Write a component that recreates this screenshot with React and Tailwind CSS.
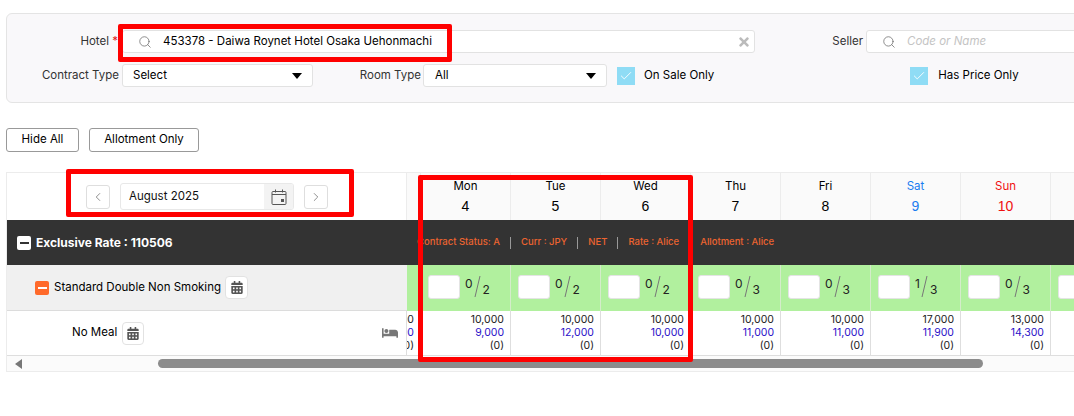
import React from 'react';
import { Search, ChevronLeft, ChevronRight, Check } from 'lucide-react';
import { FaBed, FaCalendarAlt, FaTimes } from 'react-icons/fa';

const days = [
  { name: 'Sun', num: 3, sold: 0, total: 2, rates: ['10,000', '10,000'] },
  { name: 'Mon', num: 4, sold: 0, total: 2, rates: ['10,000', '9,000'] },
  { name: 'Tue', num: 5, sold: 0, total: 2, rates: ['10,000', '12,000'] },
  { name: 'Wed', num: 6, sold: 0, total: 2, rates: ['10,000', '10,000'] },
  { name: 'Thu', num: 7, sold: 0, total: 3, rates: ['10,000', '11,000'] },
  { name: 'Fri', num: 8, sold: 0, total: 3, rates: ['10,000', '11,000'] },
  { name: 'Sat', num: 9, sold: 1, total: 3, rates: ['17,000', '11,900'], color: 'text-[#1a7df0]' },
  { name: 'Sun', num: 10, sold: 0, total: 3, rates: ['13,000', '14,300'], color: 'text-[#f01010]' },
  { name: 'Mon', num: 11, sold: 0, total: 3, rates: ['13,000', '14,300'] },
];

function Caret() {
  return <span className="w-0 h-0 border-l-[5px] border-r-[5px] border-t-[6px] border-l-transparent border-r-transparent border-t-black" />;
}

function CheckBox() {
  return (
    <span className="w-[18px] h-[18px] bg-[#8fdcf5] flex items-center justify-center shrink-0">
      <Check className="w-[14px] h-[14px] text-white" strokeWidth={1.5} />
    </span>
  );
}

function CalButton({ className }) {
  return (
    <span className={`h-[23px] bg-white border border-[#e2e2e2] rounded-[4px] flex items-center justify-center text-[#555] shrink-0 ${className}`}>
      <FaCalendarAlt className="w-[12px] h-[13px]" />
    </span>
  );
}

function MinusBox({ className, bar }) {
  return (
    <span className={`w-[14px] h-[14px] rounded-[2px] flex items-center justify-center shrink-0 ${className}`}>
      <span className={`w-[9px] h-[2px] ${bar}`} />
    </span>
  );
}

function Fraction({ sold, total }) {
  return (
    <div className="flex ml-[5px] h-[24px] text-[12px] leading-none text-[#222]">
      <span className="mt-[3px]">{sold}</span>
      <svg width="10" height="24" viewBox="0 0 10 24">
        <line x1="7" y1="1" x2="2" y2="22" stroke="#777" strokeWidth="1" />
      </svg>
      <span className="mt-[9px]">{total}</span>
    </div>
  );
}

export default function App() {
  return (
    <div className="relative w-[1074px] h-[416px] overflow-hidden bg-white font-['Inter',sans-serif] text-[11.5px] text-[#222]">
      {/* Search filters */}
      <div className="pt-[13px] pl-[6px]">
        <div className="w-[1200px] h-[90px] bg-[#f9f8fa] border border-[#e4e4e4] rounded-[6px] pt-[16px]">
          <div className="flex items-center h-[23px]">
            <div className="w-[112px] text-right pr-px text-[#333]">
              Hotel <span className="text-[#e02020]">*</span>
            </div>
            <div className="ml-[3px] w-[633px] h-[23px] bg-white border border-[#e2e2e2] rounded-[3px] flex items-center">
              <Search className="ml-[15px] w-[14px] h-[14px] text-[#666]" strokeWidth={1.25} />
              <span className="ml-[11px] text-black">453378 - Daiwa Roynet Hotel Osaka Uehonmachi</span>
              <FaTimes className="ml-auto mr-[3px] w-[14px] h-[14px] text-[#bbb]" />
            </div>
            <div className="w-[111px] text-right pr-[3px] text-[#333]">Seller</div>
            <div className="w-[300px] h-[23px] bg-white border border-[#e2e2e2] rounded-[3px] flex items-center">
              <Search className="ml-[15px] w-[14px] h-[14px] text-[#666]" strokeWidth={1.25} />
              <span className="ml-[11px] italic text-[#c4c4c4]">Code or Name</span>
            </div>
          </div>
          <div className="flex items-center h-[23px] mt-[11px]">
            <div className="w-[112px] text-right text-[#333]">Contract Type</div>
            <div className="ml-[3px] w-[191px] h-[23px] bg-white border border-[#e2e2e2] rounded-[3px] flex items-center justify-between pl-[10px] pr-[10px] text-black">
              Select <Caret />
            </div>
            <div className="w-[110px] text-right pr-[2px] text-[#333]">Room Type</div>
            <div className="w-[184px] h-[23px] bg-white border border-[#e2e2e2] rounded-[3px] flex items-center justify-between pl-[11px] pr-[10px] text-black">
              All <Caret />
            </div>
            <div className="ml-[10px] mt-px"><CheckBox /></div>
            <span className="ml-[9px] mt-px text-black">On Sale Only</span>
            <div className="ml-[196px] mt-px"><CheckBox /></div>
            <span className="ml-[10px] mt-px text-black">Has Price Only</span>
          </div>
        </div>
      </div>

      <div className="flex gap-[10px] pl-[6px] mt-[25px]">
        <button className="w-[73px] h-[24px] bg-white border border-[#999] rounded-[3px] text-black">Hide All</button>
        <button className="w-[110px] h-[24px] bg-white border border-[#999] rounded-[3px] text-black">Allotment Only</button>
      </div>

      {/* Rate table */}
      <div className="ml-[6px] mt-[20px] border-t border-l border-[#ececec]">
        {/* Date header */}
        <div className="flex h-[47px]">
          <div className="w-[400px] shrink-0 bg-white border-r border-[#ececec] flex items-center pl-[79px]">
            <button className="w-[24px] h-[24px] border border-[#dedede] rounded-[3px] flex items-center justify-center text-[#666]">
              <ChevronLeft className="w-[14px] h-[14px]" strokeWidth={1.25} />
            </button>
            <div className="ml-[10px] w-[174px] h-[27px] border border-[#e8e8e8] rounded-[3px] flex items-center overflow-hidden">
              <span className="ml-[8px] leading-none text-[#111]">August 2025</span>
              <span className="ml-auto w-[29px] h-full bg-[#f3f3f3] flex items-center justify-center">
                <svg width="16" height="16" viewBox="0 0 16 16" fill="none" stroke="#555" strokeWidth="1">
                  <rect x="1" y="2.5" width="14" height="13" rx="1" />
                  <line x1="1" y1="5.5" x2="15" y2="5.5" />
                  <line x1="4.5" y1="0.5" x2="4.5" y2="3.5" />
                  <line x1="11.5" y1="0.5" x2="11.5" y2="3.5" />
                  <rect x="10" y="10" width="3" height="3" fill="#555" stroke="none" />
                </svg>
              </span>
            </div>
            <button className="ml-[10px] w-[24px] h-[24px] border border-[#dedede] rounded-[3px] flex items-center justify-center text-[#666]">
              <ChevronRight className="w-[14px] h-[14px]" strokeWidth={1.25} />
            </button>
          </div>
          <div className="flex-1 overflow-hidden">
            <div className="flex -ml-[76px] h-full">
              {days.map((d, i) => (
                <div key={i} className={`w-[90px] shrink-0 bg-[#fafafa] border-r border-[#ececec] text-center pt-[6px] ${d.color || 'text-black'}`}>
                  <div className="leading-[14px]">{d.name}</div>
                  <div className="mt-[5px] text-[14px] leading-[16px] font-['Liberation_Sans',sans-serif]">{d.num}</div>
                </div>
              ))}
            </div>
          </div>
        </div>

        {/* Contract row */}
        <div className="flex items-center h-[45px] bg-[#333]">
          <div className="w-[400px] shrink-0 flex items-center pl-[10px]">
            <MinusBox className="bg-white" bar="bg-[#333]" />
            <span className="ml-[5px] text-[12px] font-bold text-white">Exclusive Rate : 110506</span>
          </div>
          <div className="flex items-center ml-[10px] text-[9.5px] font-medium text-[#ec6430] whitespace-nowrap">
            <span>Contract Status: A</span>
            <span className="mx-[10px] w-px h-[12px] bg-[#999]" />
            <span>Curr : JPY</span>
            <span className="mx-[10px] w-px h-[12px] bg-[#999]" />
            <span>NET</span>
            <span className="mx-[10px] w-px h-[12px] bg-[#999]" />
            <span>Rate : Alice</span>
            <span className="ml-[21px]">Allotment : Alice</span>
          </div>
        </div>

        {/* Room row */}
        <div className="flex h-[46px]">
          <div className="w-[400px] shrink-0 bg-[#f0f0f0] border-b border-[#dcdcdc] flex items-center pl-[28px]">
            <MinusBox className="bg-[#ff6a2b]" bar="bg-white" />
            <span className="ml-[5px] text-black">Standard Double Non Smoking</span>
            <CalButton className="ml-[4px] w-[23px]" />
          </div>
          <div className="flex-1 overflow-hidden">
            <div className="flex -ml-[76px] h-full">
              {days.map((d, i) => (
                <div key={i} className="w-[90px] shrink-0 bg-[#b1f09e] border-r border-[#d4ecca] flex items-start pt-[10px] pl-[7px]">
                  <input readOnly className="w-[32px] h-[24px] bg-white border border-[#e4e4e4] rounded-[3px]" />
                  <Fraction sold={d.sold} total={d.total} />
                </div>
              ))}
            </div>
          </div>
        </div>

        {/* Meal row */}
        <div className="flex h-[45px] border-b border-[#dedede]">
          <div className="w-[400px] shrink-0 bg-white border-r border-[#dedede] flex items-center pl-[65px]">
            <span className="text-black">No Meal</span>
            <CalButton className="ml-[5px] w-[22px]" />
            <FaBed className="ml-auto mr-[8px] w-[16px] h-[16px] text-[#777]" />
          </div>
          <div className="flex-1 overflow-hidden">
            <div className="flex -ml-[76px] h-full">
              {days.map((d, i) => (
                <div key={i} className="w-[90px] shrink-0 border-r border-[#dedede] text-right pr-[6px] pt-[2px] text-[10.5px] leading-[13px]">
                  <div className="text-[#222]">{d.rates[0]}</div>
                  <div className="text-[#2a10c8]">{d.rates[1]}</div>
                  <div className="text-[#222]">(0)</div>
                </div>
              ))}
            </div>
          </div>
        </div>

        {/* Scrollbar */}
        <div className="flex items-center h-[16px] bg-[#fbfbfb] border-b border-[#ececec]">
          <span className="ml-[8px] w-0 h-0 border-t-[5px] border-b-[5px] border-r-[7px] border-t-transparent border-b-transparent border-r-[#777]" />
          <div className="ml-[136px] w-[825px] h-[9px] rounded-full bg-[#8c8c8c]" />
        </div>
      </div>

      {/* Red annotation frames */}
      <div className="absolute left-[118px] top-[24px] w-[334px] h-[38px] border-[5px] border-[#ff0000] rounded-[2px]" />
      <div className="absolute left-[66px] top-[169px] w-[288px] h-[48px] border-[5px] border-[#ff0000] rounded-[2px]" />
      <div className="absolute left-[418px] top-[175px] w-[275px] h-[187px] border-[5px] border-[#ff0000] rounded-[2px]" />
    </div>
  );
}
